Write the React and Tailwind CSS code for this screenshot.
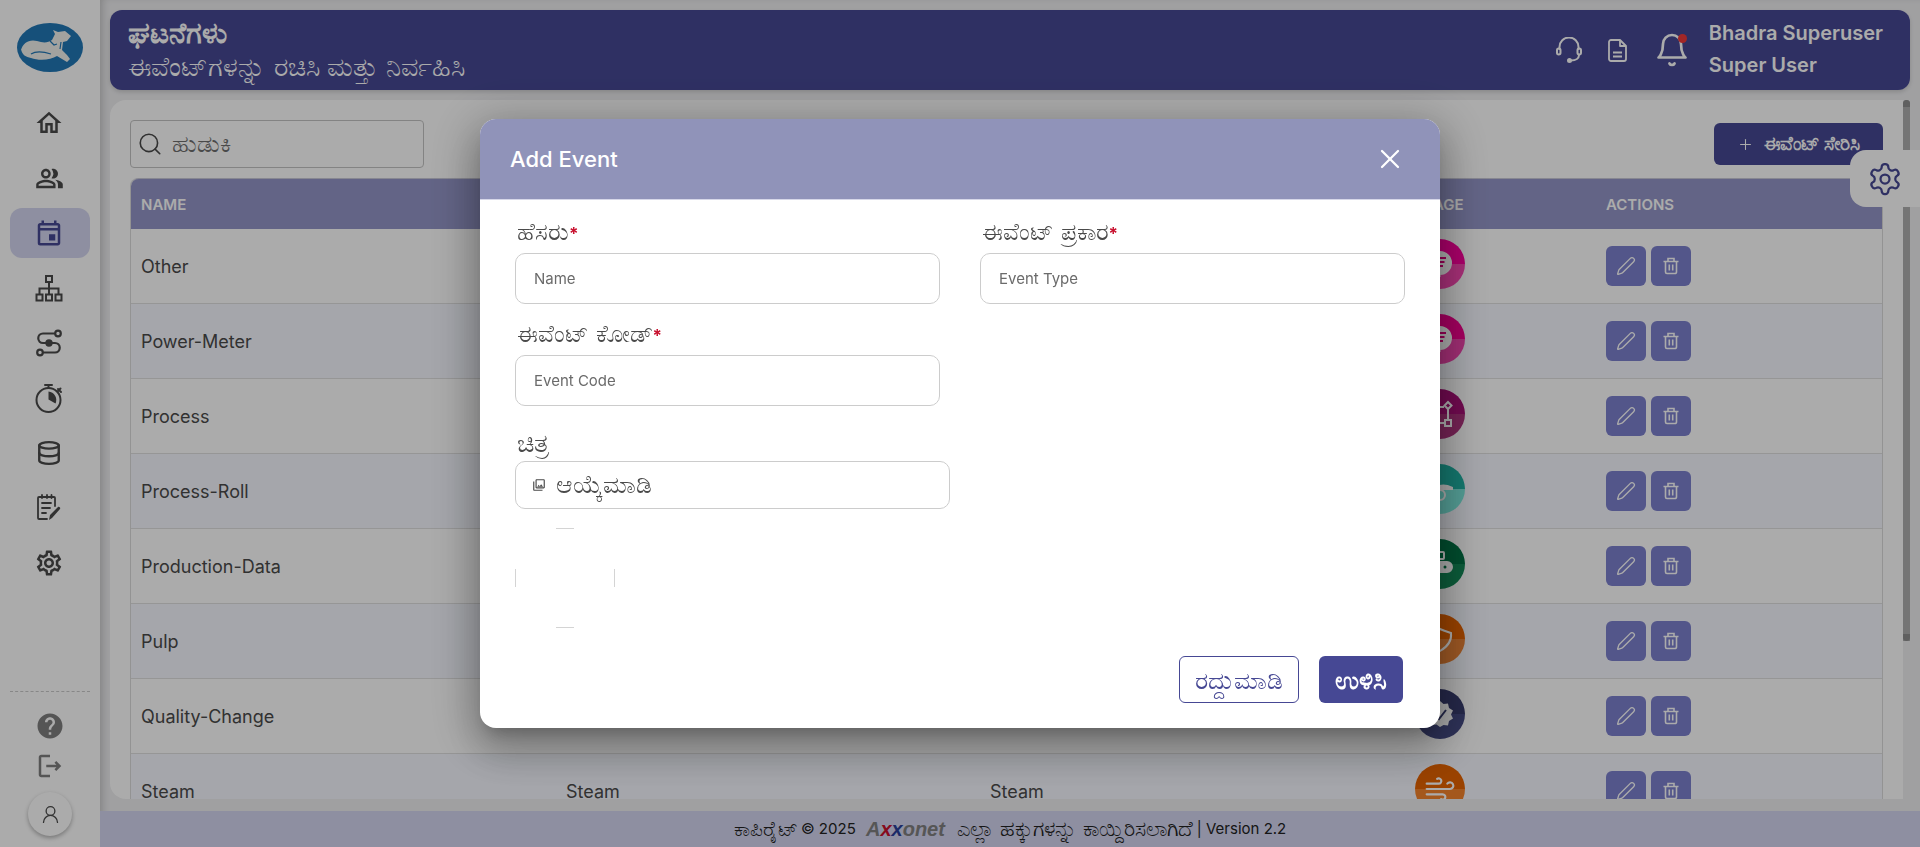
import React from 'react'
import { LuSearch, LuPlus, LuPen, LuX, LuDatabase, LuSettings, LuUserRound, LuBell, LuWind } from 'react-icons/lu'
import { MdOutlinePeopleAlt, MdOutlineEvent, MdHelp, MdOutlineLogout, MdOutlinePhotoLibrary, MdOutlineSettings, MdOutlineHome } from 'react-icons/md'

const rows = [
  { name: 'Other', top: 'bg-[#ff009e]', bottom: 'bg-[#fa48b3]', icon: 'funnel' },
  { name: 'Power-Meter', top: 'bg-[#f5008f]', bottom: 'bg-[#f045ad]', icon: 'funnel' },
  { name: 'Process', top: 'bg-[#a80f77]', bottom: 'bg-[#af347f]', icon: 'nodes' },
  { name: 'Process-Roll', top: 'bg-[#1fb3a5]', bottom: 'bg-[#7deade]', icon: 'roll' },
  { name: 'Production-Data', top: 'bg-[#007345]', bottom: 'bg-[#128a58]', icon: 'robot' },
  { name: 'Pulp', top: 'bg-[#e66300]', bottom: 'bg-[#eb8436]', icon: 'shield' },
  { name: 'Quality-Change', top: 'bg-[#383c6e]', bottom: 'bg-[#454b84]', icon: 'badge' },
  { name: 'Steam', top: 'bg-[#e66300]', bottom: 'bg-[#f5832c]', icon: 'wind' },
]

function RowIcon({ kind }) {
  if (kind === 'wind') return <LuWind size={32} color="#ffffff" strokeWidth={1.600} />
  return (
    <svg width="30" height="30" viewBox="0 0 30 30" fill="none" stroke="#ffffff" strokeWidth="2">
      {kind === 'funnel' && (
        <>
          <circle cx="15" cy="14" r="11" fill="#ffffff" />
          <path d="M9 9h12M10.500 13h9M12 17h6" stroke="#e0007f" />
          <path d="M14 24v4" strokeWidth="3" />
        </>
      )}
      {kind === 'nodes' && (
        <>
          <path d="M6 8h13M23 9v12M20 24H9M6 21V10" />
          <path d="M23 3l3.500 3.500L23 10l-3.500-3.500z" />
          <rect x="20" y="21" width="6" height="6" />
        </>
      )}
      {kind === 'roll' && (
        <>
          <path d="M2 9c6-3 8 3 12 2 4-1 8-1 14 2v3H2z" fill="#ffffff" stroke="none" />
          <circle cx="15" cy="21" r="5" />
        </>
      )}
      {kind === 'robot' && (
        <>
          <rect x="12" y="3" width="7" height="7" rx="1" />
          <rect x="4" y="13" width="23" height="10" rx="5" fill="#ffffff" />
          <circle cx="11" cy="18" r="1.500" fill="#007345" stroke="none" />
          <circle cx="20" cy="18" r="1.500" fill="#007345" stroke="none" />
        </>
      )}
      {kind === 'shield' && <path d="M15 27c-7-4-10-9-9-17 3 0 6-2 9-5 4 2 8 3 11 4 1 9-4 14-11 18z" />}
      {kind === 'badge' && (
        <>
          <path d="M15 2l3.500 3 4.500-.5 1 4.500 4 2.500-2 4 2 4-4 2.500-1 4.500-4.500-.5L15 28l-3.500-2.500-4.500.5-1-4.500-4-2.500 2-4-2-4 4-2.500 1-4.500 4.500.5z" fill="#ffffff" stroke="none" />
          <path d="M10 16l4 4 7-9" stroke="#383c6e" />
        </>
      )}
    </svg>
  )
}

function Logo() {
  return (
    <svg width="66" height="49" viewBox="0 0 66 49">
      <ellipse cx="33" cy="24.500" rx="33" ry="24.500" fill="#2278b6" />
      <path d="M4 27C6 20 12 16 20 18c6 2 11 2 15-1l3-6-2-4 5 2 7-1 6 5-4 5-4 1-1 8 5 5 3 4-3 3-10-6c-6 4-18 5-26 2-5-1-9-3-10-9z" fill="#f2f2ee" />
      <path d="M14 31c6-4 14-2 20 0M33 18l4 4 3-1M44 19l-1 7" fill="none" stroke="#2278b6" strokeWidth="1.200" />
    </svg>
  )
}

function SitemapIcon() {
  return (
    <svg width="28" height="28" viewBox="0 0 28 28" fill="none" stroke="#4a4a4a" strokeWidth="2">
      <rect x="11" y="2" width="6" height="6" />
      <rect x="1.500" y="20.500" width="6" height="6" />
      <rect x="11" y="20.500" width="6" height="6" />
      <rect x="20.500" y="20.500" width="6" height="6" />
      <path d="M14 8v12.500M4.500 20.500V14.500h19v6" />
    </svg>
  )
}

function StopwatchIcon() {
  return (
    <svg width="28" height="30" viewBox="0 0 28 30" fill="none" stroke="#4a4a4a" strokeWidth="2" strokeLinecap="round">
      <circle cx="13.500" cy="17" r="12" />
      <path d="M10 2h7M13.500 2v3M23 6l3 3M25.500 5.500l-3 3" />
      <path d="M13.500 8.500a8.500 8.500 0 0 1 7 12l-7-4z" fill="#4a4a4a" stroke="none" />
    </svg>
  )
}

function FlowIcon() {
  return (
    <svg width="28" height="28" viewBox="0 0 28 28" fill="none" stroke="#4a4a4a" strokeWidth="2.200">
      <circle cx="23" cy="4.500" r="2.800" />
      <circle cx="5" cy="23.500" r="2.800" />
      <circle cx="14" cy="14" r="2.600" fill="#4a4a4a" />
      <path d="M20 4.500H8a4.700 4.700 0 0 0 0 9.500h12a4.700 4.700 0 0 1 0 9.500H8" />
    </svg>
  )
}

function NotesIcon() {
  return (
    <svg width="26" height="28" viewBox="0 0 26 28" fill="none" stroke="#4a4a4a" strokeWidth="1.800" strokeLinecap="round">
      <path d="M11 25H3a1 1 0 0 1-1-1V4a1 1 0 0 1 1-1h15a1 1 0 0 1 1 1v8" />
      <path d="M6 1v3M11 1v3M15.500 1v3M6 9h9M6 14h8M6 19h4" />
      <path d="M13 26l1-5 8-8c1-1 3 1 2 2l-8 9z" fill="#4a4a4a" stroke="none" />
    </svg>
  )
}

function HeadsetIcon() {
  return (
    <svg width="26" height="26" viewBox="0 0 26 26" fill="none" stroke="#ffffff" strokeWidth="2" strokeLinecap="round">
      <path d="M3.500 12V10a9.500 9.500 0 0 1 19 0v2" />
      <rect x="1" y="11.500" width="3.500" height="6" rx="1.700" />
      <rect x="21.500" y="11.500" width="3.500" height="6" rx="1.700" />
      <path d="M23 18c0 3-3 5.500-8 5.500" />
      <circle cx="13.500" cy="23.500" r="1.500" fill="#ffffff" />
    </svg>
  )
}

function DocIcon() {
  return (
    <svg width="19" height="23" viewBox="0 0 19 23" fill="none" stroke="#ffffff" strokeWidth="1.800" strokeLinejoin="round">
      <path d="M3 1h9l6 6v13a2 2 0 0 1-2 2H3a2 2 0 0 1-2-2V3a2 2 0 0 1 2-2z" />
      <path d="M12 1v6h6" />
      <path d="M5 13.500h9M5 17.500h9" strokeWidth="2" />
    </svg>
  )
}

function TrashIcon() {
  return (
    <svg width="20" height="20" viewBox="0 0 20 20" fill="none" stroke="#ffffff" strokeWidth="1.600">
      <path d="M2.500 5.500h15M7 5.500v-3h6v3M4.500 5.500V16a1.500 1.500 0 0 0 1.500 1.500h8a1.500 1.500 0 0 0 1.500-1.500V5.500M8.300 8.500v6M11.700 8.500v6" />
    </svg>
  )
}

function Sidebar() {
  const item = 'h-[50px] mt-[5px] w-full flex items-center justify-center pr-[2px]'
  return (
    <aside className="w-[100px] shrink-0 h-full bg-white flex flex-col items-center relative z-10">
      <div className="pt-[23px] pb-[26px]">
        <Logo />
      </div>
      <nav className="w-[80px] flex flex-col items-center text-[#4a4a4a]">
        <div className="h-[50px] w-full flex items-center justify-center pr-[2px]"><MdOutlineHome size={30} /></div>
        <div className={item}><MdOutlinePeopleAlt size={29} /></div>
        <div className="h-[50px] mt-[5px] w-full flex items-center justify-center pr-[2px] rounded-xl bg-[#d4d6f0] text-[#464894]"><MdOutlineEvent size={30} /></div>
        <div className={item}><SitemapIcon /></div>
        <div className={item}><FlowIcon /></div>
        <div className={item}><StopwatchIcon /></div>
        <div className={item}><LuDatabase size={26} strokeWidth={2.200} /></div>
        <div className={item}><NotesIcon /></div>
        <div className={item}><MdOutlineSettings size={30} /></div>
      </nav>
      <div className="mt-auto w-[80px] border-t border-dashed border-[#c9c9c9] flex flex-col items-center pt-[19px] text-[#7f7f7f] mb-[11px]">
        <MdHelp size={30} />
        <MdOutlineLogout size={30} className="mt-[10px]" />
        <div className="mt-[11px] w-[44px] h-[44px] rounded-full bg-white shadow-[0_2px_4px_rgba(0,0,0,0.3)] flex items-center justify-center text-[#4a4a4a]">
          <LuUserRound size={21} strokeWidth={1.500} />
        </div>
      </div>
    </aside>
  )
}

function Header() {
  return (
    <header className="h-[80px] shrink-0 rounded-xl bg-[#464894] flex items-center justify-between pl-[18px] pr-[27px] text-white shadow-[0_2px_4px_rgba(0,0,0,0.15)]">
      <div>
        <div className="text-[29px] font-bold leading-[28px]">ಘಟನೆಗಳು</div>
        <div className="text-[27.200px] leading-[30px] mt-[5px]">ಈವೆಂಟ್‌ಗಳನ್ನು ರಚಿಸಿ ಮತ್ತು ನಿರ್ವಹಿಸಿ</div>
      </div>
      <div className="flex items-center">
        <HeadsetIcon />
        <div className="ml-[26px] flex"><DocIcon /></div>
        <div className="relative ml-[27px]">
          <LuBell size={36} strokeWidth={1.800} />
          <span className="absolute top-[2px] left-[24px] w-[9px] h-[9px] rounded-full bg-[#f23a3a]" />
        </div>
        <div className="ml-[19px] text-[20px] leading-[32px] font-semibold mt-[-2px]">
          <div>Bhadra Superuser</div>
          <div>Super User</div>
        </div>
      </div>
    </header>
  )
}

function ActionButton({ children }) {
  return <button className="w-[40px] h-[40px] rounded-md bg-[#7d80ce] flex items-center justify-center text-white">{children}</button>
}

function EventsTable() {
  return (
    <div className="mx-[20px] border-x border-[#dcdcdc] rounded-t-lg">
      <div className="h-[51px] pt-[2px] grid grid-cols-[425px_424px_425px_191px_1fr] items-center bg-[#9496c8] rounded-t-lg text-white text-[15px] font-semibold px-[10px] border-t border-[#c9c9d8]">
        <div>NAME</div>
        <div>EVENT TYPE</div>
        <div>EVENT CODE</div>
        <div>IMAGE</div>
        <div>ACTIONS</div>
      </div>
      {rows.map((row, i) => (
        <div
          key={row.name}
          className={`h-[75px] grid grid-cols-[425px_424px_425px_191px_1fr] items-center px-[10px] text-[18px] text-[#4a4a4a] border-b border-[#e0e0e0] ${i % 2 === 1 ? 'bg-[#f6f8ff]' : 'bg-white'}`}
        >
          <div>{row.name}</div>
          <div>{row.name}</div>
          <div>{row.name}</div>
          <div className="w-[50px] h-[50px] rounded-full overflow-hidden relative flex items-center justify-center mb-[4px]">
            <div className={`absolute inset-x-0 top-0 h-1/2 ${row.top}`} />
            <div className={`absolute inset-x-0 bottom-0 h-1/2 ${row.bottom}`} />
            <div className="relative flex"><RowIcon kind={row.icon} /></div>
          </div>
          <div className="flex gap-[5px]">
            <ActionButton><LuPen size={20} strokeWidth={1.600} /></ActionButton>
            <ActionButton><TrashIcon /></ActionButton>
          </div>
        </div>
      ))}
    </div>
  )
}

function Field({ label, placeholder }) {
  return (
    <div className="w-[425px]">
      <label className="block h-[22px] leading-[22px] text-[23.500px] text-[#4a4a4a] pl-[2px]">
        {label}<span className="text-[#c8102e] text-[17px] font-bold">*</span>
      </label>
      <div className="mt-[10px] h-[51px] rounded-[10px] border border-[#cccccc] flex items-center pl-[18px] pt-[1px] text-[15px] text-[#6b6b6b]">
        {placeholder}
      </div>
    </div>
  )
}

function Modal() {
  return (
    <div className="fixed inset-0 z-40 bg-black/[0.33] flex items-start justify-center pt-[119px]">
      <div className="w-[960px] h-[609px] bg-white rounded-2xl flex flex-col overflow-hidden shadow-[0_11px_15px_-7px_rgba(0,0,0,0.2),0_24px_38px_3px_rgba(0,0,0,0.14),0_9px_46px_8px_rgba(0,0,0,0.25)]">
        <div className="h-[81px] shrink-0 bg-[#9093b9] border-b border-[#d6d7e8] flex items-center justify-between pl-[30px] pr-[34px] text-white">
          <h2 className="text-[22px] font-medium pt-[1px]">Add Event</h2>
          <LuX size={32} strokeWidth={1.700} />
        </div>
        <div className="flex-1 pl-[35px] pr-[35px] pt-[21px] flex flex-col">
          <div className="flex gap-[40px]">
            <Field label="ಹೆಸರು" placeholder="Name" />
            <Field label="ಈವೆಂಟ್ ಪ್ರಕಾರ" placeholder="Event Type" />
          </div>
          <div className="mt-[19px]">
            <Field label="ಈವೆಂಟ್ ಕೋಡ್" placeholder="Event Code" />
          </div>
          <div className="mt-[26px] text-[26px] leading-[22px] text-[#4a4a4a] pl-[2px]">ಚಿತ್ರ</div>
          <div className="mt-[7px] w-[435px] h-[48px] rounded-[10px] border border-[#cccccc] flex items-center pl-[16px] text-[25px] text-[#4a4a4a]">
            <MdOutlinePhotoLibrary size={14} className="mr-[10px]" />
            ಆಯ್ಕೆಮಾಡಿ
          </div>
          <svg width="100" height="100" viewBox="0 0 100 100" className="mt-[19px]" stroke="#d4d4d4" fill="none">
            <path d="M41 .5h18M41 99.500h18M.5 41v18M99.500 41v18" />
          </svg>
          <div className="mt-[28px] flex justify-end gap-[20px] pr-[2px]">
            <button className="w-[120px] h-[47px] rounded-md border border-[#464894] text-[#464894] text-[25px] leading-[30px]">ರದ್ದುಮಾಡಿ</button>
            <button className="w-[84px] h-[47px] rounded-md bg-[#464894] text-white text-[26px] leading-[30px] font-bold">ಉಳಿಸಿ</button>
          </div>
        </div>
      </div>
    </div>
  )
}

export default function App() {
  return (
    <div className="w-[1920px] h-[847px] overflow-hidden flex bg-[#efeff1] font-['Inter','Noto_Sans',sans-serif]">
      <Sidebar />
      <div className="flex-1 min-w-0 flex flex-col h-full shadow-[inset_6px_0_8px_-4px_rgba(0,0,0,0.2)]">
        <div className="flex-1 min-h-0 flex flex-col pt-[10px] pl-[10px] pr-[10px]">
          <Header />
          <main className="mt-[10px] flex-1 min-h-0 flex">
            <div className="flex-1 min-w-0 bg-white rounded-tl-2xl rounded-bl-2xl overflow-hidden mb-[12px]">
              <div className="pt-[20px] pb-[10px] pl-[20px] pr-[20px] flex items-center justify-between">
                <div className="w-[294px] h-[48px] rounded border border-[#c4c4c4] flex items-center pl-[6px] text-[24px] leading-[30px] text-[#6f6f6f]">
                  <LuSearch size={26} className="text-[#4a4a4a] mr-[9px]" strokeWidth={1.500} />
                  ಹುಡುಕಿ
                </div>
                <button className="w-[169px] h-[42px] rounded-md bg-[#464894] text-white flex items-center justify-center text-[19px] leading-[24px] font-bold">
                  <LuPlus size={17} strokeWidth={1.500} className="mr-[10px]" />
                  ಈವೆಂಟ್ ಸೇರಿಸಿ
                </button>
              </div>
              <EventsTable />
            </div>
            <div className="w-[7px] h-[541px] bg-[#afafaf] rounded-t-sm flex flex-col justify-between">
              <div className="h-[7px] bg-[#8f8f8f] rounded-t-sm" />
              <div className="h-[7px] bg-[#8f8f8f] rounded-b-sm" />
            </div>
          </main>
        </div>
        <footer className="h-[36px] shrink-0 bg-[#d4d6f0] flex items-center justify-center text-[15px] text-[#222222]">
          <span className="text-[20px] leading-[24px]">ಕಾಪಿರೈಟ್</span>
          <span>&nbsp;© 2025&nbsp;</span>
          <span className="font-bold italic text-[20px] leading-[24px] text-[#808080] mx-[6px] font-['Liberation_Sans',sans-serif]">A<span className="text-[#c8102e]">x</span><span className="text-[#2a3f9a]">x</span>onet</span>
          <span className="text-[21px] leading-[24px]">&nbsp;ಎಲ್ಲಾ ಹಕ್ಕುಗಳನ್ನು ಕಾಯ್ದಿರಿಸಲಾಗಿದೆ</span>
          <span>&nbsp;| Version 2.2</span>
        </footer>
      </div>
      <div className="absolute right-0 top-[150px] w-[70px] h-[57px] bg-white rounded-l-2xl flex items-center pl-[17px] text-[#464894] z-20">
        <LuSettings size={36} strokeWidth={1.500} />
      </div>
      <Modal />
    </div>
  )
}
